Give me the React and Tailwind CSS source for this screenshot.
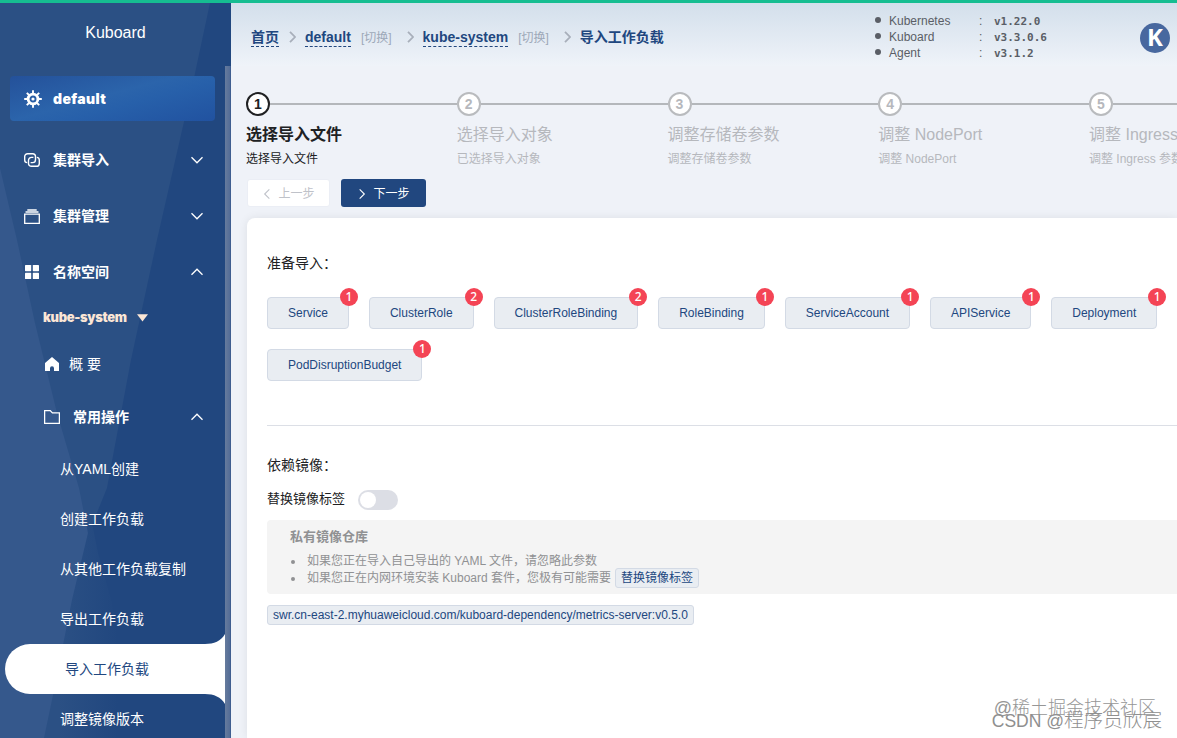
import React, { useState } from 'react'

const kinds = [
    { name: 'Service', count: 1 },
    { name: 'ClusterRole', count: 2 },
    { name: 'ClusterRoleBinding', count: 2 },
    { name: 'RoleBinding', count: 1 },
    { name: 'ServiceAccount', count: 1 },
    { name: 'APIService', count: 1 },
    { name: 'Deployment', count: 1 },
    { name: 'PodDisruptionBudget', count: 1 },
]

const steps = [
    { title: '选择导入文件', description: '选择导入文件' },
    { title: '选择导入对象', description: '已选择导入对象' },
    { title: '调整存储卷参数', description: '调整存储卷参数' },
    { title: '调整 NodePort', description: '调整 NodePort' },
    { title: '调整 Ingress 参数', description: '调整 Ingress 参数' },
]

const versions = [
    { name: 'Kubernetes', value: 'v1.22.0' },
    { name: 'Kuboard', value: 'v3.3.0.6' },
    { name: 'Agent', value: 'v3.1.2' },
]

const operations = ['从YAML创建', '创建工作负载', '从其他工作负载复制', '导出工作负载', '导入工作负载', '调整镜像版本']

function classNames(...classes) {
    return classes.filter(Boolean).join(' ')
}

const Chevron = ({ className }) => (
    <svg viewBox="0 0 12 12" className={classNames('shrink-0', className)} fill="none" stroke="currentColor" strokeWidth="1.3">
        <path d="M0.5 3.2 6 8.8 11.5 3.2" />
    </svg>
)

const GearIcon = () => (
    <svg viewBox="0 0 18 18" className="size-[18px] shrink-0" fill="none" stroke="currentColor">
        <circle cx="9" cy="9" r="4.9" strokeWidth="2.8" />
        <circle cx="9" cy="9" r="1.6" fill="currentColor" stroke="none" />
        <path strokeWidth="1.9" d="M9 .2v3M9 14.8v3M.2 9h3M14.8 9h3M2.8 2.8 5 5M13 13l2.2 2.2M15.2 2.8 13 5M5 13l-2.2 2.2" />
    </svg>
)

const LinkIcon = () => (
    <svg viewBox="0 0 16 14" className="w-4 h-3.5 shrink-0" fill="none" stroke="currentColor" strokeWidth="1.4">
        <path d="M3.2 9.6A2.6 2.6 0 0 1 .7 7V3.6A2.9 2.9 0 0 1 3.6.7h5a2.9 2.9 0 0 1 2.9 2.9v3.1a2.9 2.9 0 0 1-2.9 2.9H6.6" />
        <path d="M12.8 4.4A2.6 2.6 0 0 1 15.3 7v3.4a2.9 2.9 0 0 1-2.9 2.9h-5a2.9 2.9 0 0 1-2.9-2.9V7.3a2.9 2.9 0 0 1 2.9-2.9h2" />
    </svg>
)

const StackIcon = () => (
    <svg viewBox="0 0 16 15" className="w-4 h-[15px] shrink-0" fill="none" stroke="currentColor">
        <path strokeWidth="1.3" d="M.7 5.2h14.6v9.1H.7z" />
        <path strokeWidth="1.5" d="M1.5 3h13M3.3 1.1h9.4" />
    </svg>
)

const GridIcon = () => (
    <svg viewBox="0 0 16 16" className="size-4 shrink-0" fill="currentColor">
        <rect x="1" y="1" width="6.2" height="6.2" rx="0.6" />
        <rect x="8.8" y="1" width="6.2" height="6.2" rx="0.6" />
        <rect x="1" y="8.8" width="6.2" height="6.2" rx="0.6" />
        <rect x="8.8" y="8.8" width="6.2" height="6.2" rx="0.6" />
    </svg>
)

const HomeIcon = () => (
    <svg viewBox="0 0 14 14" className="size-3.5 shrink-0" fill="currentColor">
        <path d="M7 0 14 6.1V14H9V11.2a2 2 0 0 0-4 0V14H0V6.1z" />
    </svg>
)

const FolderIcon = () => (
    <svg viewBox="0 0 16 14" className="w-4 h-3.5 shrink-0" fill="none" stroke="currentColor" strokeWidth="1.3">
        <path d="M.6.6h5.6l2.2 2.3h7v10.5H.6z" />
    </svg>
)

const MenuGroup = ({ icon, label, open }) => (
    <div className="flex h-14 shrink-0 items-center pl-6 pr-[22px]">
        {icon}
        <span className="ml-[13px] flex-1 text-sm font-bold">{label}</span>
        <Chevron className={classNames('size-3', open && 'rotate-180')} />
    </div>
)

const Sidebar = () => (
    <aside className="relative flex w-[231px] shrink-0 flex-col overflow-hidden bg-[#21477f] text-white">
        {/* faceted backdrop */}
        <svg viewBox="0 0 231 735" className="absolute inset-0 h-full w-full" preserveAspectRatio="none">
            <defs>
                <linearGradient id="facet" x1="0" x2="1" y1="0" y2="0">
                    <stop offset="0.2" stopColor="#2b5084" />
                    <stop offset="1" stopColor="#21477f" />
                </linearGradient>
            </defs>
            <path fill="url(#facet)" d="M44 520H92L98 550 112 600 118 640V735H44z" />
            <path fill="#2b5084" d="M0 0H210L194 75 157 237 131 357 107 485 92 522H0z" />
            <path fill="#35588c" d="M0 165 17 237 35 320 57 410 79 485 88 530 72 597 52 697 44 735H0z" />
        </svg>
        <div className="relative flex h-[63px] items-center justify-center pb-1">Kuboard</div>
        <div className="relative flex min-h-0 flex-1">
            <div className="flex w-[225px] shrink-0 flex-col overflow-hidden">
                <div className="mx-2.5 mt-2.5 mb-[11px] flex h-[45px] shrink-0 items-center rounded bg-[linear-gradient(165deg,#24519a_0%,#2b64ab_45%,#2760aa_60%,#2152a0_100%)] pl-3.5">
                    <GearIcon />
                    <span className="ml-[11px] font-['Inter'] text-sm font-black tracking-[0.4px]">default</span>
                </div>
                <MenuGroup icon={<LinkIcon />} label="集群导入" />
                <MenuGroup icon={<StackIcon />} label="集群管理" />
                <MenuGroup icon={<GridIcon />} label="名称空间" open />
                <div className="flex h-[34px] shrink-0 items-center pt-0.5 pl-[43px] text-[#fbe6d6]">
                    <span className="w-[94px] font-['Inter'] text-[13px] font-black tracking-[-0.35px]">kube-system</span>
                    <svg viewBox="0 0 11 8" className="w-[11px] h-2" fill="currentColor"><path d="M0 .3h11L5.5 7.6z" /></svg>
                </div>
                <div className="flex h-[60px] shrink-0 items-center gap-2.5 pl-[45px] text-sm">
                    <HomeIcon />
                    <span>概 要</span>
                </div>
                <div className="mb-1 flex h-[46px] shrink-0 items-center pl-11 pr-[22px]">
                    <FolderIcon />
                    <span className="ml-[13px] flex-1 text-sm font-bold">常用操作</span>
                    <Chevron className="size-3 rotate-180" />
                </div>
                {operations.map((item) => (
                    item === '导入工作负载' ? (
                        <div key={item} className="relative ml-[5px] flex h-[50px] shrink-0 items-center rounded-l-full bg-white pl-[60px] text-sm text-[#21477f]">
                            {item}
                            <svg viewBox="0 0 20 10" className="absolute right-0 bottom-full h-2.5 w-5" fill="white"><path d="M0 10C9 10 16 7 20 0V10z" /></svg>
                            <svg viewBox="0 0 20 10" className="absolute right-0 top-full h-2.5 w-5" fill="white"><path d="M0 0C9 0 16 3 20 10V0z" /></svg>
                        </div>
                    ) : (
                        <div key={item} className="flex h-[50px] shrink-0 items-center pl-[60px] text-sm">{item}</div>
                    )
                ))}
            </div>
            <div className="flex-1 border-r border-[#3f5e90] bg-[linear-gradient(90deg,#667b9d,#546d97)]"></div>
        </div>
    </aside>
)

const Separator = ({ className }) => (
    <svg viewBox="0 0 7 12" className={classNames('relative -top-px h-3 w-[7px] shrink-0', className)} fill="none" stroke="#a8afba" strokeWidth="1.8">
        <path d="M1 .8 6 6 1 11.2" />
    </svg>
)

const Crumb = ({ children }) => (
    <a className="border-b border-dashed border-[#21477f] font-bold leading-[17px]">{children}</a>
)

const Header = () => (
    <header className="flex h-[63px] shrink-0 bg-linear-to-b from-[#d3dfeb] to-[#eff3f9]">
        <div className="flex h-[69px] w-[643px] shrink-0 items-center pl-5 text-sm whitespace-nowrap text-[#21477f]">
            <Crumb>首页</Crumb>
            <Separator className="ml-2.5" />
            <span className="ml-[9px] flex"><Crumb>default</Crumb></span>
            <span className="ml-2.5 text-xs text-[#9da8b8]">[切换]</span>
            <Separator className="ml-[15px]" />
            <span className="ml-[9px] flex"><Crumb>kube-system</Crumb></span>
            <span className="ml-2.5 text-xs text-[#9da8b8]">[切换]</span>
            <Separator className="ml-[15px]" />
            <span className="relative -top-px ml-[9px] font-bold">导入工作负载</span>
        </div>
        <ul className="w-[266px] shrink-0 pt-2.5 text-xs leading-4 text-[#5a5e66]">
            {versions.map((item) => (
                <li key={item.name} className="flex items-center">
                    <span className="relative -top-px ml-px size-1.5 rounded-full bg-[#5a5e66]"></span>
                    <span className="ml-2 w-[90px]">{item.name}</span>
                    <span className="w-[15px]">:</span>
                    <span className="pt-px font-['DejaVu_Sans_Mono'] text-[11px] leading-[15px] font-bold">{item.value}</span>
                </li>
            ))}
        </ul>
        <div className="mt-5 flex size-[30px] shrink-0 items-center justify-center rounded-full bg-[#48689f] pb-[3px] font-['Open_Sans'] text-2xl leading-none font-bold text-white">K</div>
    </header>
)

const App = () => {
    const [replaceTag, setReplaceTag] = useState(false)

    return (
        <div className="flex h-screen w-screen flex-col overflow-hidden bg-[#eff2f8] font-['Liberation_Sans','Noto_Sans_CJK_SC',sans-serif] text-[#202123]">
            <div className="h-[3px] shrink-0 bg-[#16bd91]"></div>
            <div className="flex min-h-0 flex-1">
                <Sidebar />
                <main className="relative flex min-w-0 flex-1 flex-col overflow-hidden">
                    <Header />
                    <div className="mt-[26px] ml-[15px] flex shrink-0">
                        {steps.map((step, index) => (
                            <div key={index} className={classNames('w-[210.75px] shrink-0 whitespace-nowrap', index > 0 && 'text-[#b6b8bd]')}>
                                <div className="flex items-center">
                                    <span className={classNames('flex size-6 items-center justify-center rounded-full border-2 bg-white text-sm font-bold', index > 0 ? 'border-[#b9bbbe]' : 'border-[#202123]')}>{index + 1}</span>
                                    <span className="h-0.5 flex-1 bg-[#b4b7bb]"></span>
                                </div>
                                <div className={classNames('mt-2 text-base leading-[22px]', index === 0 && 'font-bold')}>{step.title}</div>
                                <div className="mt-[5px] text-xs leading-4">{step.description}</div>
                            </div>
                        ))}
                    </div>
                    <div className="mt-3 mb-[11px] ml-4 flex shrink-0 gap-[11px] text-xs">
                        <button className="flex h-7 w-[83px] items-center justify-center gap-1.5 rounded-[3px] border border-[#ebeef5] bg-white pt-px text-[#bfc2c9]">
                            <Chevron className="size-2.5 rotate-90" />上一步
                        </button>
                        <button className="flex h-7 w-[85px] items-center justify-center gap-1.5 rounded-[3px] bg-[#21477f] pt-px text-white">
                            <Chevron className="size-2.5 -rotate-90" />下一步
                        </button>
                    </div>
                    <section className="ml-4 flex-1 rounded-tl-lg bg-white pl-5 shadow-[0_0_10px_rgba(0,0,0,0.08)]">
                        <h3 className="pt-[35px] text-sm">准备导入：</h3>
                        <div className="mt-6 flex w-[910px] flex-wrap gap-x-[19.9px] gap-y-5">
                            {kinds.map((kind) => (
                                <div key={kind.name} className="relative flex h-8 items-center rounded border border-[#d3dae5] bg-[#e9edf2] px-5 text-xs text-[#21477f]">
                                    {kind.name}
                                    <span className="absolute -top-2.5 -right-2.5 flex size-[18px] items-center justify-center rounded-full bg-[#f44455] font-['Noto_Sans'] text-xs font-medium text-white">{kind.count}</span>
                                </div>
                            ))}
                        </div>
                        <div className="mt-11 h-px bg-[#dcdfe6]"></div>
                        <h3 className="mt-[29px] text-sm">依赖镜像：</h3>
                        <div className="mt-[15px] flex h-5 items-center">
                            <span className="relative -top-px w-[91px] text-[13px]">替换镜像标签</span>
                            <button onClick={() => setReplaceTag(!replaceTag)} className={classNames('flex h-5 w-10 items-center rounded-full px-0.5', replaceTag ? 'justify-end bg-[#21477f]' : 'bg-[#dcdee5]')}>
                                <span className="size-4 rounded-full bg-white"></span>
                            </button>
                        </div>
                        <div className="mt-2.5 h-[74px] rounded-l bg-[#f4f4f4] pt-2 pl-[23px] text-[#909193]">
                            <div className="text-[13px] leading-[18px] font-bold">私有镜像仓库</div>
                            <ul className="mt-[7px] text-xs leading-[17px]">
                                <li className="flex h-[17px] items-center">
                                    <span className="mr-3 ml-px size-1 rounded-full bg-current"></span>
                                    如果您正在导入自己导出的 YAML 文件，请忽略此参数
                                </li>
                                <li className="flex h-[17px] items-center">
                                    <span className="mr-3 ml-px size-1 rounded-full bg-current"></span>
                                    如果您正在内网环境安装 Kuboard 套件，您极有可能需要
                                    <span className="relative -top-px ml-1 flex h-5 items-center rounded-[3px] border border-[#d3dae5] bg-[#e9edf2] px-[5px] pt-px text-[#21477f]">替换镜像标签</span>
                                </li>
                            </ul>
                        </div>
                        <span className="mt-[11px] flex h-5 w-[427px] items-center rounded-[3px] border border-[#d3dae5] bg-[#e9edf2] pl-[5px] text-xs text-[#21477f]">swr.cn-east-2.myhuaweicloud.com/kuboard-dependency/metrics-server:v0.5.0</span>
                    </section>
                    {/* watermarks stamped over the corner */}
                    <div className="absolute right-[21px] bottom-[18px] text-lg leading-6 font-light whitespace-nowrap text-[#969696]">@稀土掘金技术社区</div>
                    <div className="absolute right-[15px] bottom-[5px] text-[17.5px] leading-6 font-light whitespace-nowrap text-[#8f8f8f]">CSDN @<span className="text-[19.6px]">程序员欣宸</span></div>
                </main>
            </div>
        </div>
    )
}

export default App
